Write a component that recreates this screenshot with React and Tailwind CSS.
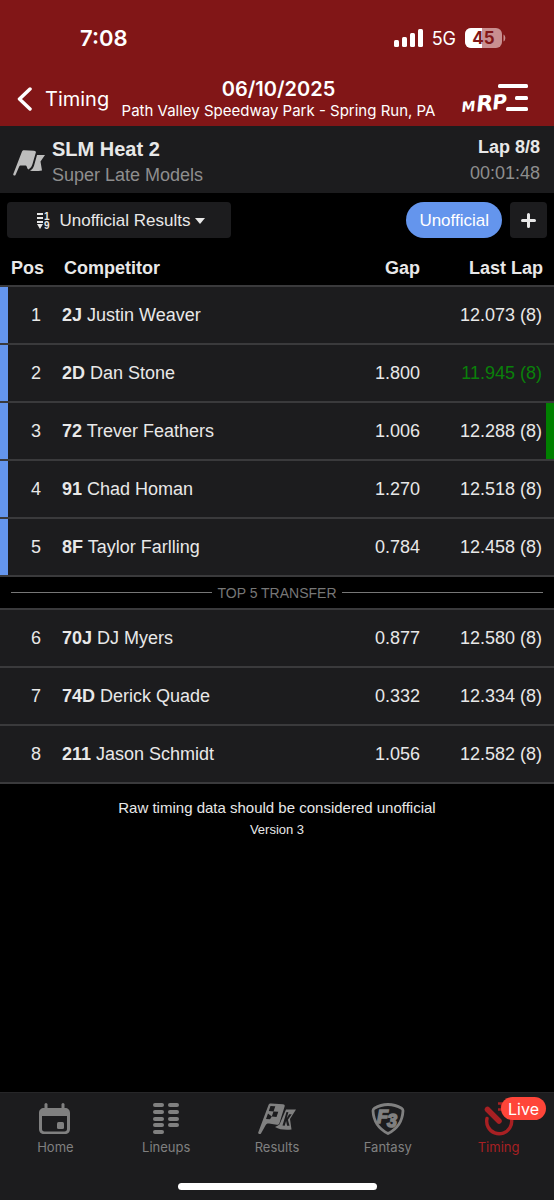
import React from 'react';

const results = [
  { pos: 1, number: '2J', name: 'Justin Weaver', gap: '', lastLap: '12.073 (8)' },
  { pos: 2, number: '2D', name: 'Dan Stone', gap: '1.800', lastLap: '11.945 (8)', fastest: true },
  { pos: 3, number: '72', name: 'Trever Feathers', gap: '1.006', lastLap: '12.288 (8)', improved: true },
  { pos: 4, number: '91', name: 'Chad Homan', gap: '1.270', lastLap: '12.518 (8)' },
  { pos: 5, number: '8F', name: 'Taylor Farlling', gap: '0.784', lastLap: '12.458 (8)' },
  { pos: 6, number: '70J', name: 'DJ Myers', gap: '0.877', lastLap: '12.580 (8)' },
  { pos: 7, number: '74D', name: 'Derick Quade', gap: '0.332', lastLap: '12.334 (8)' },
  { pos: 8, number: '211', name: 'Jason Schmidt', gap: '1.056', lastLap: '12.582 (8)' }
];

const TRANSFER_COUNT = 5;

const StatusBar = () => (
  <div className="flex h-[76px] items-center justify-between pl-20 pr-12">
    <span className="text-[22px] font-semibold">7:08</span>
    <div className="flex items-center gap-[9px]">
      <svg width="29" height="18" viewBox="0 0 29 18" fill="currentColor">
        <rect x="0" y="11" width="5" height="7" rx="1.5" />
        <rect x="8" y="8" width="5" height="10" rx="1.5" />
        <rect x="16" y="4" width="5" height="14" rx="1.5" />
        <rect x="24" y="0" width="5" height="18" rx="1.5" />
      </svg>
      <span className="text-[18px]">5G</span>
      <svg width="41" height="20" viewBox="0 0 41 20">
        <rect x="0" y="0" width="37" height="20" rx="6" fill="#c98f90" />
        <path d="M6 0h11v20H6a6 6 0 0 1-6-6V6a6 6 0 0 1 6-6z" fill="#fff" />
        <path d="M38.5 6.5c2.4 1 2.4 6 0 7z" fill="#c98f90" />
        <text x="18.5" y="16" textAnchor="middle" fontSize="17" fontWeight="700" fill="#811617">45</text>
      </svg>
    </div>
  </div>
);

const MrpLogo = () => (
  <svg className="overflow-visible" width="68" height="30" viewBox="0 0 68 30" fill="#fff">
    <g fontFamily="DejaVu Sans, sans-serif" fontWeight="700" fontStyle="italic" transform="rotate(-5 2 28)">
      <text x="1" y="28" fontSize="14">M</text>
      <text x="16" y="29" fontSize="22">R</text>
      <text x="32" y="28" fontSize="20">P</text>
    </g>
    <rect x="37" y="0" width="30" height="4" rx="1.5" />
    <rect x="54" y="12" width="13" height="4" rx="1.5" />
    <rect x="45" y="23" width="22" height="4" rx="1.5" />
  </svg>
);

const FlagsIcon = () => (
  <svg width="32" height="33" viewBox="0 -7 32 33" fill="#bdbdbd">
    <path d="M9 1.500C9.500.5 10.300 0 11.500.2L21 .8c1.500.1 2.200.8 1.700 2.300L19.500 14c-.8 2.500-1.800 4-4 5.500-1-.4-1.300-1.200-1.500-2.200-.3-1.300-1-1.700-2.200-1.700H8c-1 0-1.500.4-2 1.400L2.500 25c-.7 1-2.600.4-2.200-.9z" />
    <path d="M24 5h8l-4.500 6.500 1.500 9c-4 .7-8 .8-12 .3 2-1 3.300-2.800 4-5z" />
  </svg>
);

const SortIcon = () => (
  <svg className="overflow-visible" width="14" height="16" viewBox="0 0 14 16" fill="#e8e8e8">
    <rect x="0" y="0" width="6" height="2" />
    <rect x="0" y="4" width="6" height="2" />
    <rect x="0" y="8" width="6" height="2" />
    <path d="M0 11h6l-3 5z" />
    <text x="7" y="7" fontSize="10" fontWeight="700">1</text>
    <text x="7" y="16" fontSize="10" fontWeight="700">9</text>
  </svg>
);

const HomeIcon = () => (
  <svg width="32" height="32" viewBox="0 0 32 32" fill="currentColor">
    <rect x="5.5" y="0" width="3" height="8" rx="1.5" />
    <rect x="22.5" y="0" width="3" height="8" rx="1.5" />
    <path fillRule="evenodd" d="M5 5h21c3 0 5 2 5 5v16c0 3-2 5-5 5H5c-3 0-5-2-5-5V10c0-3 2-5 5-5zm-2 8v13c0 1.500.8 2.500 2.500 2.500h20c1.700 0 2.500-1 2.500-2.500V13z" />
    <rect x="18" y="19" width="7" height="7" rx="1.5" />
  </svg>
);

const LineupsIcon = () => (
  <svg width="26" height="32" viewBox="0 0 26 32" fill="currentColor">
    {[0, 7, 14, 20, 27].map((y) => (
      <rect key={y} x="0" y={y} width="11" height="4" rx="2" />
    ))}
    {[0, 7, 14, 20].map((y) => (
      <rect key={y} x="15" y={y} width="11" height="4" rx="2" />
    ))}
  </svg>
);

const ResultsIcon = () => (
  <svg width="38" height="32" viewBox="0 0 38 32" fill="currentColor">
    <path fillRule="evenodd" d="M10.500 2C11 1 12 .5 13 .6l12 .6c1.500.1 2 1 1.600 2.300L21.500 20c-.4 1.400-1.300 2-2.800 1.700L11 20.500c-1.700-.2-2.700.3-3.400 1.800L3 30.500c-.8 1.200-3.400.6-2.700-1.300zM12.500 3l-1.700 5 4.700.4L17.300 3.300zM15.500 8.400L13.800 13.500l4.700.4 1.800-5.100zM10 10.500L8 16l4 .3 1.800-2.800z" />
    <path fillRule="evenodd" d="M28 6.500h10l-6 9.500 1.500 10.500c-6 .5-12 .3-16.500-2.500l3-1.500c1-.4 1.600-1 2-2.200zM28.500 9l-4 13.500 2.200.2 1.400-4.800 1 4.800h2.400l-1.600-6 3.800-5.500h-2.600l-2.400 4 1.700-6z" />
  </svg>
);

const FantasyIcon = () => (
  <svg className="overflow-visible" width="34" height="32" viewBox="0 0 34 32">
    <path d="M17 1.500c5 0 9.500 1.300 13.500 3.700.9.600 1.500 1.300 1.500 2.500C31.500 17.500 27 25.500 17 30.500 7 25.500 2.500 17.500 2 7.700c0-1.200.6-1.900 1.500-2.500C7.500 2.800 12 1.500 17 1.500z" fill="none" stroke="currentColor" strokeWidth="2.8" />
    <g fontFamily="Liberation Sans, sans-serif" fontWeight="700" fontStyle="italic" fill="currentColor" stroke="currentColor" strokeWidth="1.5">
      <text x="6" y="20" fontSize="18">F</text>
      <text x="16" y="24" fontSize="18">3</text>
    </g>
  </svg>
);

const TimingIcon = () => (
  <svg width="32" height="34" viewBox="0 0 32 34" fill="none" stroke="currentColor" strokeLinecap="round">
    <path d="M15 1.500h8M19 2v6M15 7.500h8" strokeWidth="2.4" strokeLinecap="butt" />
    <path d="M4.500 7.500L16 19" strokeWidth="5.5" />
    <path d="M4 16.500A12.500 12.500 0 1 0 24 9.500" strokeWidth="3.4" />
  </svg>
);

const tabs = [
  { label: 'Home', icon: <HomeIcon /> },
  { label: 'Lineups', icon: <LineupsIcon /> },
  { label: 'Results', icon: <ResultsIcon /> },
  { label: 'Fantasy', icon: <FantasyIcon /> },
  { label: 'Timing', icon: <TimingIcon />, active: true, badge: 'Live' }
];

const ResultRow = ({ row }) => (
  <tr className="h-[58px] bg-[#1c1c1e]">
    <td className={`border-b-2 border-[#3a3a3c] pr-3 text-right ${row.pos <= TRANSFER_COUNT ? 'shadow-[inset_8px_0_0_#6495ed]' : ''}`}>
      {row.pos}
    </td>
    <td className="border-b-2 border-[#3a3a3c] pl-[9px]">
      <b>{row.number}</b> {row.name}
    </td>
    <td className="border-b-2 border-[#3a3a3c] text-right">{row.gap}</td>
    <td
      className={`border-b-2 border-[#3a3a3c] pr-3 text-right ${row.fastest ? 'text-[#0a800a]' : ''} ${
        row.improved ? 'shadow-[inset_-8px_0_0_#008000]' : ''
      }`}
    >
      {row.lastLap}
    </td>
  </tr>
);

const App = () => (
  <div className="flex min-h-screen flex-col bg-black font-['Liberation_Sans',Arial,sans-serif] text-[#e8e8e8]">
    <header className="h-[126px] bg-[#811617] font-['Inter',sans-serif] text-white">
      <StatusBar />
      <div className="grid grid-cols-[104px_1fr_101px] items-center">
        <button className="flex items-center gap-[13px] pl-[17px] text-[20px]">
          <svg className="shrink-0" width="15" height="24" viewBox="0 0 15 24" fill="none" stroke="currentColor" strokeWidth="3.5" strokeLinecap="round" strokeLinejoin="round">
            <path d="M13 2L2.500 12 13 22" />
          </svg>
          Timing
        </button>
        <div className="flex flex-col items-center whitespace-nowrap">
          <h1 className="pt-px text-[20px] font-semibold leading-[24px]">06/10/2025</h1>
          <p className="text-[15px] leading-[20px]">Path Valley Speedway Park - Spring Run, PA</p>
        </div>
        <a href="#" aria-label="MRP" className="flex justify-end pr-[25px]">
          <MrpLogo />
        </a>
      </div>
    </header>

    <section className="flex h-[67px] items-center bg-[#1c1c1e] pl-[13px] pr-[14px]">
      <FlagsIcon />
      <div className="ml-[7px] flex-1">
        <h2 className="pt-1 text-[20px] font-bold leading-[26px]">SLM Heat 2</h2>
        <p className="text-[18px] leading-[26px] text-[#8e8e8e]">Super Late Models</p>
      </div>
      <div className="text-right text-[18px] leading-[26px]">
        <p className="font-bold">Lap 8/8</p>
        <p className="text-[#8e8e8e]">00:01:48</p>
      </div>
    </section>

    <div className="flex items-center gap-2 px-[7px] pt-[9px] text-[17px]">
      <button className="flex h-9 w-[224px] items-center justify-center rounded bg-[#1c1c1e] pl-1 pt-px">
        <SortIcon />
        <span className="ml-2">Unofficial Results</span>
        <svg className="ml-1" width="10" height="6" viewBox="0 0 10 6" fill="currentColor">
          <path d="M0 0h10L5 6z" />
        </svg>
      </button>
      <button className="ml-auto h-9 rounded-full bg-[#6495ed] px-[13px] pt-px text-white">Unofficial</button>
      <button aria-label="Add" className="flex h-9 w-[37px] items-center justify-center rounded bg-[#1c1c1e]">
        <svg width="15" height="15" viewBox="0 0 15 15" stroke="currentColor" strokeWidth="3" strokeLinecap="round">
          <path d="M7.500 1.500v12M1.500 7.500h12" />
        </svg>
      </button>
    </div>

    <table className="mt-[9px] w-full table-fixed border-separate border-spacing-0 text-[18px]">
      <thead>
        <tr className="h-10">
          <th className="w-[53px] border-b-2 border-[#3a3a3c] pl-[11px] pt-1 text-left">Pos</th>
          <th className="border-b-2 border-[#3a3a3c] pl-[11px] pt-1 text-left">Competitor</th>
          <th className="w-[100px] border-b-2 border-[#3a3a3c] pt-1 text-right">Gap</th>
          <th className="w-[134px] border-b-2 border-[#3a3a3c] pr-[11px] pt-1 text-right">Last Lap</th>
        </tr>
      </thead>
      <tbody>
        {results.slice(0, TRANSFER_COUNT).map((row) => (
          <ResultRow key={row.pos} row={row} />
        ))}
        <tr className="h-[33px]">
          <td colSpan={4} className="border-b-2 border-[#3a3a3c] px-[11px]">
            <div className="flex items-center gap-[5px] text-[14px] leading-[20px] text-[#777]">
              <span className="h-px flex-1 bg-[#777]" />
              TOP 5 TRANSFER
              <span className="h-px flex-1 bg-[#777]" />
            </div>
          </td>
        </tr>
        {results.slice(TRANSFER_COUNT).map((row) => (
          <ResultRow key={row.pos} row={row} />
        ))}
      </tbody>
    </table>

    <div className="pt-3 text-center">
      <p className="text-[15px] leading-[24px]">Raw timing data should be considered unofficial</p>
      <p className="text-[13px] leading-[20px]">Version 3</p>
    </div>

    <nav className="mt-auto border-t border-[#262628] bg-[#1c1c1e] font-['Inter',sans-serif]">
      <div className="grid grid-cols-5 pt-2">
        {tabs.map((tab) => (
          <a
            key={tab.label}
            href="#"
            className={`relative flex flex-col items-center text-[13px] leading-[20px] ${tab.active ? 'text-[#a82023]' : 'text-[#808080]'}`}
          >
            <span className="flex h-9 items-center">{tab.icon}</span>
            {tab.label}
            {tab.badge && (
              <span className="absolute -top-1 right-2 flex h-[23px] items-center rounded-full bg-[#ff4539] px-[7px] text-[16px] text-white">
                {tab.badge}
              </span>
            )}
          </a>
        ))}
      </div>
      <div className="mx-auto mb-[10px] mt-[26px] h-[7px] w-[199px] rounded-full bg-white" />
    </nav>
  </div>
);

export default App;
